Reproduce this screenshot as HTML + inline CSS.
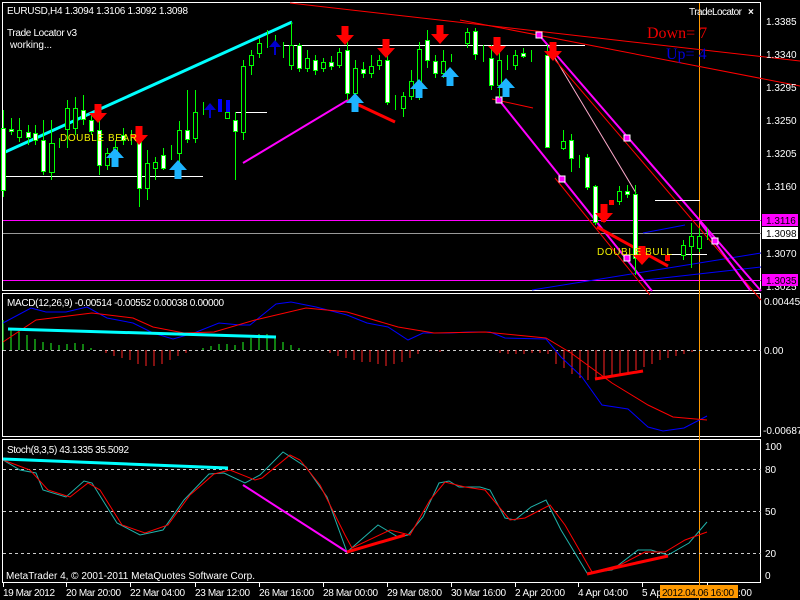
<!DOCTYPE html>
<html><head><meta charset="utf-8"><style>
html,body{margin:0;padding:0;background:#000;width:800px;height:600px;overflow:hidden}
svg{display:block}
text{font-family:"Liberation Sans",sans-serif;font-size:10px;fill:#fff}
</style></head><body>
<svg width="800" height="600" viewBox="0 0 800 600" xmlns="http://www.w3.org/2000/svg">
<defs>
<path id="dn" d="M-3.5,-10h7v9h5.5l-9,10l-9,-10h5.5z" fill="#f00"/>
<path id="up" d="M-3.5,10h7v-9h5.5l-9,-10l-9,10h5.5z" fill="#1eb4ff"/>
<path id="upb" d="M-1,9h2v-8h5l-6,-7l-6,7h5z" fill="#00c"/>
</defs>
<rect width="800" height="600" fill="#000"/>
<g fill="none" stroke="#fff" stroke-width="1">
<rect x="2.5" y="2.5" width="758" height="288"/>
<rect x="2.5" y="293.5" width="758" height="143"/>
<rect x="2.5" y="439.5" width="758" height="143"/>
</g>
<line x1="3" y1="220.5" x2="761" y2="220.5" stroke="#f0f"/>
<line x1="3" y1="233.5" x2="761" y2="233.5" stroke="#999"/>
<line x1="3" y1="280.5" x2="761" y2="280.5" stroke="#f0f"/>
<line x1="699.5" y1="3" x2="699.5" y2="600" stroke="#ff9900"/>
<line x1="290" y1="3" x2="800" y2="61" stroke="#f00"/>
<line x1="460" y1="20" x2="800" y2="86" stroke="#f00"/>
<line x1="492" y1="99" x2="533" y2="108" stroke="#f00"/>
<line x1="532" y1="290" x2="761" y2="253" stroke="#00f"/>
<line x1="645" y1="280" x2="761" y2="267" stroke="#00f"/>
<line x1="643" y1="233" x2="685" y2="225" stroke="#00f"/>
<line x1="555" y1="58" x2="636" y2="193" stroke="#fac" stroke-width="1"/>
<line x1="555" y1="60" x2="761" y2="300" stroke="#f00" stroke-width="1"/>
<line x1="555" y1="178" x2="650" y2="295" stroke="#f00" stroke-width="1"/>
<g stroke="#f0f" stroke-width="2" fill="none">
<line x1="539" y1="35" x2="761" y2="291"/>
<line x1="499" y1="100" x2="652" y2="291"/>
<line x1="243" y1="163" x2="348" y2="100"/>
<line x1="700" y1="222" x2="750" y2="290"/>
</g>
<g fill="#f0f" stroke="#fff" stroke-width="1">
<rect x="536" y="32" width="6" height="6"/><rect x="624" y="135" width="6" height="6"/><rect x="712" y="238" width="6" height="6"/>
<rect x="496" y="97" width="6" height="6"/><rect x="559" y="176" width="6" height="6"/><rect x="624" y="255" width="6" height="6"/>
</g>
<line x1="348" y1="100" x2="395" y2="122" stroke="#f00" stroke-width="3"/>
<line x1="597" y1="227" x2="668" y2="266" stroke="#f00" stroke-width="3"/>
<line x1="3" y1="153" x2="292" y2="22" stroke="#0ff" stroke-width="3"/>
<g stroke="#fff">
<line x1="3" y1="176.5" x2="203" y2="176.5"/>
<line x1="236" y1="112.5" x2="267" y2="112.5"/>
<line x1="283" y1="45.5" x2="585" y2="45.5"/>
<line x1="655" y1="200.5" x2="700" y2="200.5"/>
<line x1="667" y1="254.5" x2="707" y2="254.5"/>
</g>
<g stroke="#0f0" stroke-width="1">
<path d="M3.5 110V197M11.5 118V135M19.5 118V142M28.5 125V145M35.5 125V145M43.5 120V175M51.5 120V180M59.5 138V148M67.5 100V148M75.5 97V135M83.5 95V125M91.5 115V135M99.5 116V175M107.5 148V170M115.5 140V160M123.5 128V145M131.5 130V145M139.5 127V207M147.5 150V200M155.5 157V180M163.5 148V170M171.5 145V160M179.5 121V165M187.5 90V143M195.5 90V143M203.5 102V115M235.5 112V180M243.5 60V140M251.5 50V75M259.5 38V58M267.5 30V48M275.5 35V55M283.5 42V58M291.5 22V70M299.5 43V72M307.5 50V72M315.5 55V75M323.5 58V72M331.5 56V70M339.5 48V68M347.5 30V100M355.5 60V100M363.5 62V78M371.5 55V78M379.5 55V70M387.5 40V105M395.5 95V110M403.5 92V117M411.5 70V100M419.5 42V100M427.5 30V68M435.5 55V78M443.5 50V78M451.5 54V62M467.5 28V48M475.5 28V60M483.5 45V62M491.5 45V90M499.5 50V98M507.5 55V70M515.5 50V70M523.5 48V58M531.5 50V62M547.5 45V148M563.5 130V150M571.5 134V172M579.5 155V168M587.5 154V190M595.5 185V225M619.5 186V205M627.5 185V198M635.5 185V275M683.5 240V260M691.5 223V268M699.5 228V252M707.5 228V240"/>
</g>
<g stroke="#0f0" stroke-width="1" fill="#000">
<rect x="17.5" y="130.5" width="4" height="7"/><rect x="49.5" y="143.5" width="5" height="29"/><rect x="65.5" y="108.5" width="4" height="21"/><rect x="73.5" y="108.5" width="4" height="20"/><rect x="105.5" y="153.5" width="4" height="12"/><rect x="113.5" y="147.5" width="4" height="8"/><rect x="145.5" y="163.5" width="4" height="25"/><rect x="153.5" y="162.5" width="4" height="6"/><rect x="177.5" y="130.5" width="4" height="23"/><rect x="193.5" y="112.5" width="4" height="26"/><rect x="225.5" y="112.5" width="4" height="6"/><rect x="241.5" y="66.5" width="4" height="66"/><rect x="249.5" y="55.5" width="4" height="10"/><rect x="257.5" y="43.5" width="4" height="10"/><rect x="289.5" y="45.5" width="4" height="20"/><rect x="305.5" y="58.5" width="4" height="10"/><rect x="321.5" y="62.5" width="4" height="6"/><rect x="337.5" y="52.5" width="4" height="13"/><rect x="353.5" y="68.5" width="4" height="25"/><rect x="369.5" y="66.5" width="4" height="7"/><rect x="377.5" y="60.5" width="4" height="5"/><rect x="401.5" y="96.5" width="4" height="12"/><rect x="409.5" y="81.5" width="4" height="15"/><rect x="417.5" y="49.5" width="4" height="47"/><rect x="441.5" y="61.5" width="4" height="12"/><rect x="465.5" y="32.5" width="4" height="11"/><rect x="497.5" y="60.5" width="4" height="25"/><rect x="513.5" y="55.5" width="4" height="10"/><rect x="561.5" y="141.5" width="4" height="7"/><rect x="617.5" y="191.5" width="4" height="10"/><rect x="681.5" y="245.5" width="4" height="10"/><rect x="689.5" y="236.5" width="4" height="10"/><rect x="697.5" y="236.5" width="4" height="12"/>
</g>
<g stroke="#0f0" stroke-width="1" fill="#fff">
<rect x="1.5" y="128.5" width="4" height="62"/><rect x="9.5" y="129.5" width="4" height="2"/><rect x="26.5" y="132.5" width="4" height="5"/><rect x="33.5" y="133.5" width="4" height="7"/><rect x="41.5" y="140.5" width="4" height="31"/><rect x="81.5" y="110.5" width="4" height="9"/><rect x="89.5" y="120.5" width="4" height="11"/><rect x="97.5" y="130.5" width="4" height="35"/><rect x="121.5" y="135.5" width="4" height="5"/><rect x="137.5" y="140.5" width="4" height="48"/><rect x="161.5" y="155.5" width="4" height="13"/><rect x="185.5" y="130.5" width="4" height="9"/><rect x="233.5" y="120.5" width="4" height="11"/><rect x="297.5" y="45.5" width="4" height="23"/><rect x="313.5" y="60.5" width="4" height="10"/><rect x="329.5" y="62.5" width="4" height="4"/><rect x="345.5" y="50.5" width="4" height="43"/><rect x="361.5" y="69.5" width="4" height="4"/><rect x="385.5" y="60.5" width="4" height="42"/><rect x="425.5" y="40.5" width="4" height="20"/><rect x="433.5" y="61.5" width="4" height="12"/><rect x="473.5" y="31.5" width="4" height="23"/><rect x="489.5" y="58.5" width="4" height="27"/><rect x="521.5" y="53.5" width="4" height="3"/><rect x="545.5" y="55.5" width="4" height="92"/><rect x="569.5" y="140.5" width="4" height="18"/><rect x="585.5" y="157.5" width="4" height="30"/><rect x="593.5" y="186.5" width="4" height="36"/><rect x="625.5" y="191.5" width="4" height="3"/><rect x="633.5" y="194.5" width="4" height="64"/>
</g>
<g fill="#00f"><rect x="218" y="99" width="4" height="13"/><rect x="226" y="100" width="4" height="12"/></g>
<g fill="#f00"><rect x="601" y="205" width="5" height="17"/><rect x="609" y="200" width="5" height="5"/><rect x="641" y="252" width="5" height="8"/><rect x="665" y="255" width="5" height="6"/></g>
<use href="#dn" x="98" y="114"/><use href="#dn" x="139" y="136"/><use href="#dn" x="345" y="36"/><use href="#dn" x="386" y="49"/><use href="#dn" x="497" y="47"/><use href="#dn" x="553" y="52"/><use href="#dn" x="604" y="214"/><use href="#dn" x="642" y="256"/><use href="#dn" x="440" y="35"/>
<use href="#up" x="115" y="157"/><use href="#up" x="178" y="169"/><use href="#up" x="355" y="102"/><use href="#up" x="419" y="88"/><use href="#up" x="450" y="76"/><use href="#up" x="506" y="87"/>
<use href="#upb" x="210" y="109"/><use href="#upb" x="275" y="46"/>
<text x="7" y="14" textLength="181">EURUSD,H4  1.3094 1.3106 1.3092 1.3098</text>
<text x="7" y="36" textLength="70">Trade Locator v3</text>
<text x="10" y="48" textLength="42">working...</text>
<text x="60" y="141" style="fill:#ee0" textLength="77">DOUBLE  BEAR</text>
<text x="597" y="255" style="fill:#ee0" textLength="75">DOUBLE  BULL</text>
<text x="689" y="15" textLength="53">TradeLocator</text>
<text x="748" y="15" style="font-weight:bold">×</text>
<text x="647" y="38" style="font-family:'Liberation Serif',serif;font-size:16px;fill:#e00">Down=  7</text>
<text x="666" y="59" style="font-family:'Liberation Serif',serif;font-size:16px;fill:#00d">Up=  4</text>
<g style="font-size:10px">
<text x="766" y="25">1.3385</text><text x="766" y="58">1.3340</text><text x="766" y="91">1.3295</text><text x="766" y="124">1.3250</text><text x="766" y="157">1.3205</text><text x="766" y="190">1.3160</text><text x="766" y="257">1.3070</text><text x="766" y="290">1.3025</text>
</g>
<rect x="762" y="214" width="36" height="12" fill="#f0f"/><text x="766" y="224" style="fill:#000">1.3116</text>
<rect x="762" y="227" width="36" height="12" fill="#fff"/><text x="766" y="237" style="fill:#000">1.3098</text>
<rect x="762" y="274" width="36" height="12" fill="#f0f"/><text x="766" y="284" style="fill:#000">1.3035</text>
<line x1="3" y1="350.5" x2="761" y2="350.5" stroke="#ccc" stroke-dasharray="3,3"/>
<path stroke="#2f2" d="M3 350v-30M11 350v-20M19 350v-18M27 350v-15M35 350v-11M43 350v-8M51 350v-7M59 350v-5M67 350v-6M75 350v-7M83 350v-6M91 350v-2M203 350v-2M211 350v-4M219 350v-6M227 350v-6M235 350v-5M243 350v-8M251 350v-12M259 350v-16M267 350v-16M275 350v-12M283 350v-8M291 350v-5M299 350v-2"/>
<path stroke="#f22" d="M106 350v3M114 350v6M122 350v8M130 350v10M138 350v14M146 350v16M154 350v16M162 350v14M170 350v10M178 350v6M186 350v3M330 350v3M338 350v6M346 350v8M354 350v10M362 350v12M370 350v12M378 350v14M386 350v16M394 350v14M402 350v12M410 350v8M418 350v4M440 350v2M500 350v3M508 350v4M516 350v4M524 350v4M532 350v3M540 350v3M548 350v4M556 350v14M564 350v18M572 350v24M580 350v28M588 350v30M596 350v30M604 350v28M612 350v26M620 350v24M628 350v22M636 350v20M644 350v17M652 350v14M660 350v10M668 350v8M676 350v6M684 350v4M692 350v2"/>
<polyline fill="none" stroke="#00f" points="3,323 31,308 46,312 66,312 87,307 107,318 133,323 153,333 173,339 194,333 219,323 240,325 250,325 276,304 291,302 316,307 347,315 367,323 388,327 408,340 423,333 449,333 469,332 490,332 505,338 546,339 561,357 582,377 602,405 628,409 648,427 663,431 684,428 707,416"/>
<polyline fill="none" stroke="#f00" points="3,342 36,320 92,313 133,318 153,327 184,333 214,332 255,320 306,308 347,312 398,327 434,333 485,332 546,338 571,353 612,383 648,405 673,417 707,420"/>
<line x1="8" y1="329" x2="276" y2="337" stroke="#0ff" stroke-width="3"/>
<line x1="595" y1="379" x2="643" y2="371" stroke="#f00" stroke-width="3"/>
<text x="7" y="306" textLength="217">MACD(12,26,9) -0.00514 -0.00552 0.00038 0.00000</text>
<text x="764" y="305">0.00445</text><text x="764" y="354">0.00</text><text x="763" y="434">-0.00687</text>
<g stroke="#ccc" stroke-dasharray="3,3"><line x1="3" y1="469.5" x2="761" y2="469.5"/><line x1="3" y1="511.5" x2="761" y2="511.5"/><line x1="3" y1="553.5" x2="761" y2="553.5"/></g>
<polyline fill="none" stroke="#20b2aa" points="3,460 20,470 36,473 43,490 66,497 84,481 92,483 117,523 140,535 163,530 184,500 209,474 224,473 245,483 260,475 283,452 306,467 327,497 347,552 378,525 398,537 408,535 423,517 439,483 449,481 459,487 480,487 490,490 505,518 515,520 531,507 546,500 561,530 587,573 612,570 638,550 651,550 668,555 689,543 707,522"/>
<polyline fill="none" stroke="#f00" points="3,460 30,470 48,490 70,497 88,483 100,490 122,525 145,533 168,525 190,495 214,474 230,470 255,480 262,478 290,455 300,460 320,485 345,535 352,548 390,530 410,535 430,500 445,482 465,487 485,490 510,520 525,518 550,505 565,525 592,572 620,565 645,552 665,552 685,540 707,532"/>
<line x1="3" y1="459" x2="228" y2="468" stroke="#0ff" stroke-width="3"/>
<line x1="243" y1="485" x2="347" y2="552" stroke="#f0f" stroke-width="2"/>
<line x1="347" y1="552" x2="405" y2="535" stroke="#f00" stroke-width="3"/>
<line x1="587" y1="574" x2="668" y2="556" stroke="#f00" stroke-width="3"/>
<text x="7" y="453" textLength="122">Stoch(8,3,5) 43.1335 35.5092</text>
<text x="6" y="579" textLength="249">MetaTrader 4, © 2001-2011 MetaQuotes Software Corp.</text>
<text x="765" y="450">100</text><text x="765" y="473">80</text><text x="765" y="515">50</text><text x="765" y="557">20</text><text x="765" y="579">0</text>
<g stroke="#fff"><path d="M3.5 583v4M66.5 583v4M130.5 583v4M195.5 583v4M259.5 583v4M323.5 583v4M387.5 583v4M451.5 583v4M515.5 583v4M578.5 583v4M642.5 583v4M707.5 583v4"/></g>
<g>
<text x="3" y="596" textLength="52">19 Mar 2012</text><text x="66" y="596" textLength="55">20 Mar 20:00</text><text x="130" y="596" textLength="55">22 Mar 04:00</text><text x="195" y="596" textLength="55">23 Mar 12:00</text><text x="259" y="596" textLength="55">26 Mar 16:00</text><text x="323" y="596" textLength="55">28 Mar 00:00</text><text x="387" y="596" textLength="55">29 Mar 08:00</text><text x="451" y="596" textLength="55">30 Mar 16:00</text><text x="515" y="596" textLength="50">2 Apr 20:00</text><text x="578" y="596" textLength="50">4 Apr 04:00</text><text x="642" y="596">5 Ap</text>
</g>
<rect x="660" y="585" width="78" height="13" fill="#f90"/>
<text x="662" y="596" textLength="72" style="fill:#000">2012.04.06 16:00</text>
<text x="738" y="596">:00</text>
</svg>
</body></html>
